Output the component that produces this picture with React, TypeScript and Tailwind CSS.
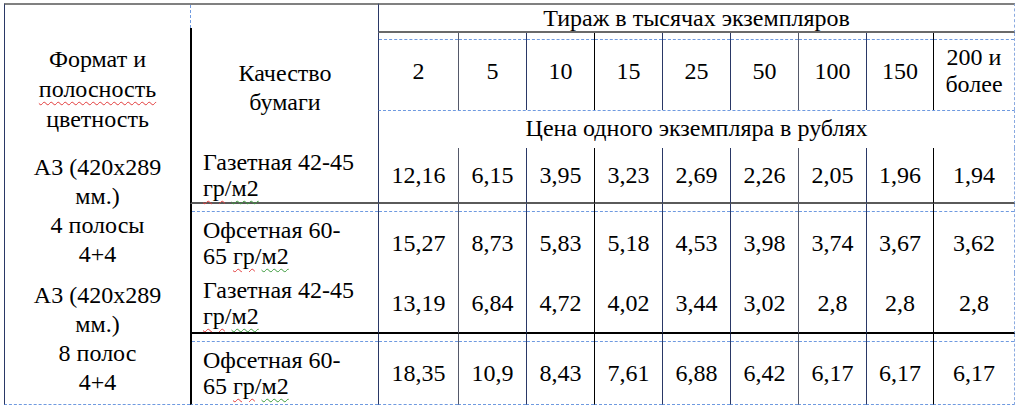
const heads = ['2', '5', '10', '15', '25', '50', '100', '150'];

const prices = [
  ['12,16', '6,15', '3,95', '3,23', '2,69', '2,26', '2,05', '1,96', '1,94'],
  ['15,27', '8,73', '5,83', '5,18', '4,53', '3,98', '3,74', '3,67', '3,62'],
  ['13,19', '6,84', '4,72', '4,02', '3,44', '3,02', '2,8', '2,8', '2,8'],
  ['18,35', '10,9', '8,43', '7,61', '6,88', '6,42', '6,17', '6,17', '6,17'],
];

// vertical rule colour for each numeric column (left edge)
const vline = [
  'border-l-[#2a3866]',
  'border-l-[#55596a]',
  'border-l-[#2a3866]',
  'border-l-black',
  'border-l-[#2a3866]',
  'border-l-[#2a3866]',
  'border-l-[#55596a]',
  'border-l-[#2a3866]',
  'border-l-black',
];

const lastCol = 'border-r border-r-[#8aaae0] [border-right-style:dashed]';

const rowOuter = [
  'border-b-2 border-b-[#5a5a5a]',
  '',
  'border-b-2 border-b-black',
  'border-b border-b-[#6f9ae0] [border-bottom-style:dashed]',
];
const hasGap = [false, true, false, true];

function Red({ children }: { children: React.ReactNode }) {
  return <span className="underline decoration-wavy decoration-[#e23b3b] decoration-1 underline-offset-[4px]">{children}</span>;
}

function Green({ children }: { children: React.ReactNode }) {
  return <span className="underline decoration-wavy decoration-[#3a9a3a] decoration-1 underline-offset-[4px]">{children}</span>;
}

function Data({ r, line, right, inner, children }: { r: number; line: string; right?: boolean; inner: string; children: React.ReactNode }) {
  return (
    <div className={`flex flex-col ${line} ${rowOuter[r]} ${right ? lastCol : ''}`}>
      {hasGap[r] && <div className="h-[7px] shrink-0" />}
      <div className={`flex flex-1 ${hasGap[r] ? 'border-t border-dashed border-t-[#6f9ae0]' : ''} ${inner}`}>{children}</div>
    </div>
  );
}

function Paper({ r }: { r: number }) {
  const gas = r % 2 === 0;
  return (
    <Data r={r} line="border-l-2 border-l-black" inner="flex-col justify-center pl-[11px] leading-[26px]">
      {gas ? (
        <>
          <span>Газетная 42-45</span>
          <span>
            <Red>гр</Red>/<Green>м2</Green>
          </span>
        </>
      ) : (
        <>
          <span>Офсетная 60-</span>
          <span>
            65 <Red>гр</Red>/<Green>м2</Green>
          </span>
        </>
      )}
    </Data>
  );
}

export default function App() {
  return (
    <div className="min-h-[409px] bg-white pl-[4px] pt-[3px] font-[family-name:Liberation_Serif,Times_New_Roman,serif] text-[24px] text-black [&_*]:font-[family-name:Liberation_Serif,Times_New_Roman,serif]">
      <div className="grid grid-cols-[186px_188px_80px_68px_68px_68px_68px_68px_68px_67px_82px] grid-rows-[30px_77px_38px_56px_69px_61px_71px]">
        {/* header: format */}
        <div className="row-span-3 flex items-center justify-center border-l border-t-2 border-l-[#2a3866] border-t-[#808080] pt-[25px] text-center leading-[30px]">
          <div>
            Формат и
            <br />
            <Red>полосность</Red>
            <br />
            цветность
          </div>
        </div>

        {/* header: paper */}
        <div className="row-span-3 flex flex-col border-t-2 border-t-[#808080]">
          <div className="h-[23px] shrink-0 border-l border-dashed border-l-[#6f9ae0]" />
          <div className="flex flex-1 items-center justify-center border-l-2 border-l-black text-center leading-[29px]">
            Качество
            <br />
            бумаги
          </div>
        </div>

        {/* header: run */}
        <div className={`col-span-9 flex items-center justify-center border-b-2 border-l border-t-2 border-b-[#6a6a6a] border-t-[#808080] ${vline[0]} ${lastCol}`}>
          Тираж в тысячах экземпляров
        </div>

        {heads.map((h, i) => (
          <div key={h} className={`flex flex-col border-l ${vline[i]}`}>
            <div className="h-[6px] shrink-0" />
            <div className="flex flex-1 items-center justify-center border-t border-dashed border-t-[#6f9ae0] pb-2">{h}</div>
          </div>
        ))}
        <div className={`flex flex-col border-l ${vline[8]} ${lastCol}`}>
          <div className="h-[6px] shrink-0" />
          <div className="flex flex-1 items-center justify-center border-t border-dashed border-t-[#6f9ae0] pb-2 text-center leading-[27px]">
            200 и
            <br />
            более
          </div>
        </div>

        <div className={`col-span-9 flex items-center justify-center border-l border-t border-t-[#6f9ae0] [border-top-style:dashed] pb-1 ${vline[0]} ${lastCol}`}>
          Цена одного экземпляра в рублях
        </div>

        {prices.map((row, r) => (
          <div key={r} className="contents">
            {r % 2 === 0 && (
              <div
                className={`row-span-2 flex flex-col items-center justify-center border-l border-l-[#2a3866] text-center leading-[29px] ${
                  r === 2 ? 'border-b border-b-[#6f9ae0] [border-bottom-style:dashed]' : ''
                }`}
              >
                <span>А3 (420x289</span>
                <span>мм.)</span>
                <span>{r === 0 ? '4 полосы' : '8 полос'}</span>
                <span>4+4</span>
              </div>
            )}
            <Paper r={r} />
            {row.map((v, i) => (
              <Data key={i} r={r} line={`border-l ${vline[i]}`} right={i === 8} inner="items-center justify-center">
                {v}
              </Data>
            ))}
          </div>
        ))}
      </div>
    </div>
  );
}
